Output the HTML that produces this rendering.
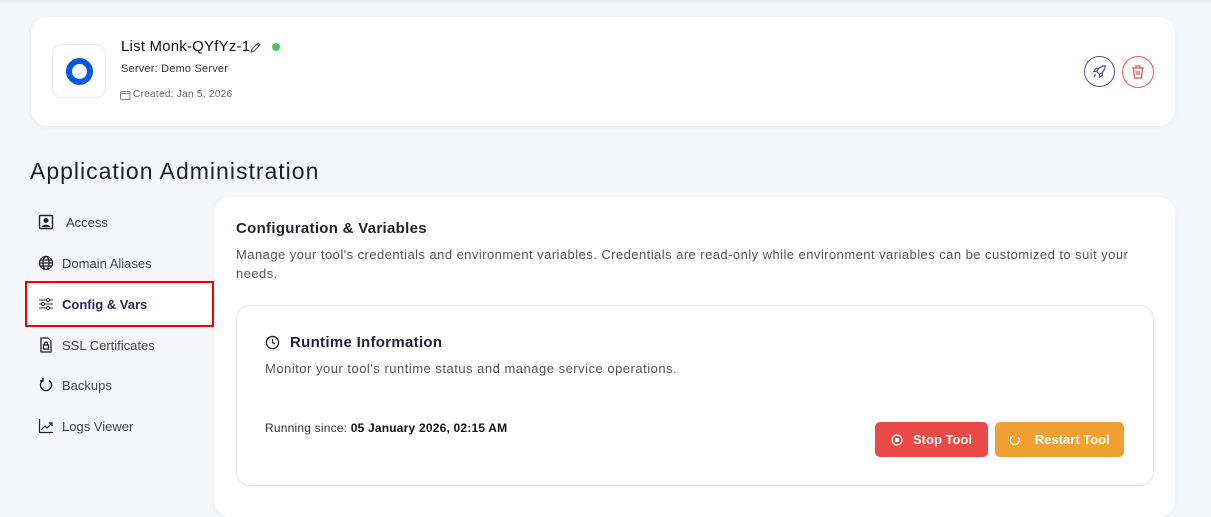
<!DOCTYPE html><html><head><style>
*{box-sizing:border-box;margin:0;padding:0}
body{width:1211px;height:501px;overflow:hidden;background:#f6f7f9;font-family:"Liberation Sans",sans-serif;color:#1f2330;position:relative}
.abs{position:absolute}
.card{background:#fff;border-radius:16px;box-shadow:0 1px 4px rgba(0,0,0,.06)}
.nav{position:absolute;left:38px;font-size:13px;color:#444;display:flex;align-items:center;gap:8px}
.nav svg{width:16px;height:16px}
.btn{position:absolute;top:422px;height:35px;border-radius:5px;color:#fff;font-weight:bold;font-size:13px;display:flex;align-items:center;justify-content:center;gap:10px}
</style></head><body>
<div class="abs" style="left:0;top:0;width:1211px;height:6px;background:linear-gradient(#e9eaee,#f6f7f9)"></div>
<div class="abs card" style="left:31px;top:17px;width:1144px;height:109px"></div>
<div class="abs" style="left:52px;top:44px;width:54px;height:54px;border:1px solid #eee;border-radius:10px;background:#fff"></div>
<div class="abs" style="left:66px;top:58px;width:27px;height:27px;border:6px solid #0a57e0;border-radius:50%"></div>
<div class="abs" style="left:121px;top:38px;font-size:15px;color:#111;letter-spacing:.2px">List Monk-QYfYz-1</div>
<svg class="abs" style="left:249px;top:41px" width="13" height="13" viewBox="0 0 13 13" fill="none" stroke="#555" stroke-width="1.1"><path d="M2 11l1-3 6-6 2 2-6 6z M8 3l2 2"/></svg>
<div class="abs" style="left:272px;top:43px;width:8px;height:8px;border-radius:50%;background:#4cc35d"></div>
<div class="abs" style="left:121px;top:63px;font-size:11px;color:#333;letter-spacing:.2px">Server: Demo Server</div>
<svg class="abs" style="left:120px;top:90px" width="11" height="10" viewBox="0 0 11 10" fill="none" stroke="#888"><rect x=".5" y="1.5" width="9.5" height="8" rx="1"/><path d="M.5 3.5h9.5"/></svg>
<div class="abs" style="left:133px;top:89px;font-size:10px;color:#666;letter-spacing:.3px">Created: Jan 5, 2026</div>
<div class="abs" style="left:1084px;top:56px;width:31px;height:31px;border:1px solid #5a5290;border-radius:50%"></div>
<svg class="abs" style="left:1092px;top:64px" width="15" height="15" viewBox="0 0 16 16" fill="none" stroke="#5a5290" stroke-width="1.3"><path d="M14 2c-4 0-7 2-9 6l3 3c4-2 6-5 6-9z M5 8H2l2-3h3 M8 11v3l3-2V9 M4 11l-2 3"/></svg>
<div class="abs" style="left:1122px;top:56px;width:32px;height:32px;border:1px solid #e85a5a;border-radius:50%"></div>
<svg class="abs" style="left:1130px;top:64px" width="16" height="16" viewBox="0 0 16 16" fill="none" stroke="#e85a5a" stroke-width="1.3"><path d="M2 4h12 M6 4V2h4v2 M3.5 4l1 10h7l1-10 M7 7v4 M9 7v4"/></svg>
<div class="abs" style="left:30px;top:158px;font-size:23px;color:#222;letter-spacing:1px">Application Administration</div>
<div class="nav" style="top:214px"><svg viewBox="0 0 16 16"><rect x="1.5" y="1.5" width="13" height="13" rx="1" fill="none" stroke="#222" stroke-width="1.4"/><circle cx="8" cy="6.5" r="2.5" fill="#222"/><path d="M3.5 13c1-3 8-3 9 0z" fill="#222"/></svg><span style="margin-left:4px">Access</span></div>
<div class="nav" style="top:255px"><svg viewBox="0 0 16 16" fill="none" stroke="#222" stroke-width="1.3"><circle cx="8" cy="8" r="6.5"/><ellipse cx="8" cy="8" rx="3" ry="6.5"/><path d="M1.5 8h13M2.5 5h11M2.5 11h11"/></svg>Domain Aliases</div>
<div class="abs" style="left:25px;top:281px;width:189px;height:46px;background:#fff;border:2px solid #e00"></div>
<div class="nav" style="top:296px;color:#2a2560;font-weight:bold"><svg viewBox="0 0 16 16" fill="none" stroke="#2a2560" stroke-width="1.1"><path d="M1 4h14M1 8h14M1 12h14"/><circle cx="10" cy="4" r="1.6" fill="#fff"/><circle cx="5" cy="8" r="1.6" fill="#fff"/><circle cx="10" cy="12" r="1.6" fill="#fff"/></svg>Config &amp; Vars</div>
<div class="nav" style="top:337px"><svg viewBox="0 0 16 16" fill="none" stroke="#222" stroke-width="1.3"><path d="M3 1h7l3 3v11H3z"/><rect x="5.5" y="8" width="5" height="4"/><path d="M6.5 8V6.5a1.5 1.5 0 013 0V8"/></svg>SSL Certificates</div>
<div class="nav" style="top:377px"><svg viewBox="0 0 16 16" fill="none" stroke="#222" stroke-width="1.4"><path d="M11 3.5A5.5 5.5 0 1 1 5 3.5M5 1v3H2"/></svg>Backups</div>
<div class="nav" style="top:418px"><svg viewBox="0 0 16 16" fill="none" stroke="#222" stroke-width="1.2"><path d="M1.5 1v13.5H15M3 12l4-4 2 2 5-5M11 5h3v3"/></svg>Logs Viewer</div>
<div class="abs card" style="left:214px;top:197px;width:961px;height:320px"></div>
<div class="abs" style="left:236px;top:220px;font-size:15px;font-weight:bold;color:#1f2330;letter-spacing:.3px">Configuration &amp; Variables</div>
<div class="abs" style="left:236px;top:245px;width:925px;font-size:13px;line-height:19px;color:#555;letter-spacing:.45px">Manage your tool's credentials and environment variables. Credentials are read-only while environment variables can be customized to suit your needs.</div>
<div class="abs" style="left:236px;top:305px;width:918px;height:181px;border:1px solid #e6e7ea;border-radius:14px;background:#fff"></div>
<svg class="abs" style="left:265px;top:335px" width="15" height="15" viewBox="0 0 16 16" fill="none" stroke="#222" stroke-width="1.4"><circle cx="8" cy="8" r="6.5"/><path d="M8 4v4l2.5 1.5"/></svg>
<div class="abs" style="left:290px;top:334px;font-size:15px;font-weight:bold;color:#1f2330;letter-spacing:.3px">Runtime Information</div>
<div class="abs" style="left:265px;top:361px;font-size:13px;color:#555;letter-spacing:.5px">Monitor your tool's runtime status and manage service operations.</div>
<div class="abs" style="left:265px;top:421px;font-size:12px;color:#333;letter-spacing:.2px">Running since: <b style="color:#111">05 January 2026, 02:15 AM</b></div>
<div class="btn" style="left:875px;width:113px;background:#eb4848"><svg width="12" height="12" viewBox="0 0 12 12"><circle cx="6" cy="6" r="5" fill="none" stroke="#fff" stroke-width="1.2"/><rect x="4" y="4" width="4" height="4" fill="#fff"/></svg>Stop Tool</div>
<div class="btn" style="left:995px;width:129px;background:#f29f33"><svg width="12" height="12" viewBox="0 0 12 12" fill="none" stroke="#fff" stroke-width="1.2"><path d="M9.5 3.5A4.5 4.5 0 1 1 4 2"/></svg>&nbsp;Restart Tool</div>
</body></html>
